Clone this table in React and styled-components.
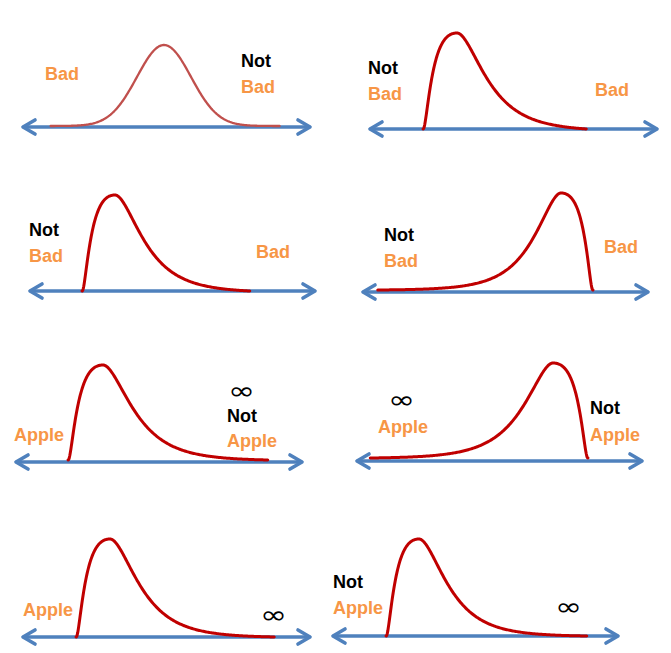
import React from "react";
import styled, { createGlobalStyle } from "styled-components";

const GlobalStyle = createGlobalStyle`
  html, body {
    margin: 0;
    padding: 0;
    background: #ffffff;
  }
`;

const colors = {
  axis: "#4f81bd",
  curve: "#c00000",
  soft: "#c0504d",
  orange: "#f79646",
  black: "#000000",
};

// right / left skewed curve, a gaussian in log space with a different spread on each side
function skewPath({ x0, xm, peak, base, end, dir }) {
  const vm = Math.abs(xm - x0);
  const vEnd = Math.abs(end - x0);
  const h = base - peak;
  const g = (v) => {
    const L = Math.log(v / vm);
    const s = L < 0 ? 1.2 : 0.56;
    return Math.exp((-L * L) / (2 * s * s));
  };
  const pts = [`M${x0} ${base}`];
  for (let v = 0.25; v <= vEnd; v += v < vm * 1.5 ? 0.5 : 1) {
    const t = v / vEnd;
    const y = base - h * g(v) * (1 - t ** 6);
    pts.push(`L${(x0 + dir * v).toFixed(2)} ${y.toFixed(2)}`);
  }
  return pts.join(" ");
}

function bellPath({ c, s, peak, base }) {
  const h = base - peak;
  const pts = [];
  for (let x = c - 4.2 * s; x <= c + 4.3 * s; x += 1) {
    const y = base - h * Math.exp(-((x - c) ** 2) / (2 * s * s));
    pts.push(`${pts.length ? "L" : "M"}${x.toFixed(2)} ${y.toFixed(2)}`);
  }
  return pts.join(" ");
}

const panels = [
  {
    id: "p1",
    axis: { x1: 23, x2: 310, y: 127 },
    soft: true,
    path: bellPath({ c: 164, s: 27, peak: 45, base: 126 }),
    labels: [
      { text: "Bad", x: 45, y: 74, tone: "orange" },
      { text: "Not", x: 241, y: 61, tone: "black" },
      { text: "Bad", x: 241, y: 87, tone: "orange" },
    ],
  },
  {
    id: "p2",
    axis: { x1: 45, x2: 332, y: 129 },
    path: skewPath({ x0: 98, xm: 132, peak: 33, base: 129, end: 262, dir: 1 }),
    labels: [
      { text: "Not", x: 43, y: 68, tone: "black" },
      { text: "Bad", x: 43, y: 94, tone: "orange" },
      { text: "Bad", x: 270, y: 90, tone: "orange" },
    ],
  },
  {
    id: "p3",
    axis: { x1: 30, x2: 315, y: 126 },
    path: skewPath({ x0: 82, xm: 115, peak: 30, base: 126, end: 250, dir: 1 }),
    labels: [
      { text: "Not", x: 29, y: 65, tone: "black" },
      { text: "Bad", x: 29, y: 91, tone: "orange" },
      { text: "Bad", x: 256, y: 87, tone: "orange" },
    ],
  },
  {
    id: "p4",
    axis: { x1: 38, x2: 323, y: 127 },
    path: skewPath({ x0: 268, xm: 236, peak: 28, base: 125, end: 52, dir: -1 }),
    labels: [
      { text: "Not", x: 59, y: 70, tone: "black" },
      { text: "Bad", x: 59, y: 96, tone: "orange" },
      { text: "Bad", x: 279, y: 82, tone: "orange" },
    ],
  },
  {
    id: "p5",
    axis: { x1: 16, x2: 302, y: 132 },
    path: skewPath({ x0: 68, xm: 103, peak: 35, base: 130, end: 268, dir: 1 }),
    labels: [
      { text: "Apple", x: 14, y: 105, tone: "orange" },
      { text: "∞", x: 228, y: 61, tone: "black", sym: true },
      { text: "Not", x: 227, y: 85.5, tone: "black" },
      { text: "Apple", x: 227, y: 111, tone: "orange" },
    ],
  },
  {
    id: "p6",
    axis: { x1: 32, x2: 317, y: 131 },
    path: skewPath({ x0: 263, xm: 228, peak: 33, base: 128, end: 45, dir: -1 }),
    labels: [
      { text: "∞", x: 63, y: 70, tone: "black", sym: true },
      { text: "Apple", x: 53, y: 97, tone: "orange" },
      { text: "Not", x: 265, y: 78, tone: "black" },
      { text: "Apple", x: 265, y: 105, tone: "orange" },
    ],
  },
  {
    id: "p7",
    axis: { x1: 23, x2: 310, y: 142 },
    path: skewPath({ x0: 76, xm: 110, peak: 44, base: 142, end: 275, dir: 1 }),
    labels: [
      { text: "Apple", x: 23, y: 115, tone: "orange" },
      { text: "∞", x: 260, y: 120, tone: "black", sym: true },
    ],
  },
  {
    id: "p8",
    axis: { x1: 8, x2: 293, y: 141 },
    path: skewPath({ x0: 61, xm: 94, peak: 44, base: 141, end: 262, dir: 1 }),
    labels: [
      { text: "Not", x: 8, y: 87, tone: "black" },
      { text: "Apple", x: 8, y: 113, tone: "orange" },
      { text: "∞", x: 230, y: 112, tone: "black", sym: true },
    ],
  },
];

function Axis({ x1, x2, y }) {
  const len = 12;
  const half = 7;
  return (
    <g
      fill="none"
      stroke={colors.axis}
      strokeWidth="3.6"
      strokeLinecap="round"
      strokeLinejoin="round"
    >
      <line x1={x1 + 1} y1={y} x2={x2 - 1} y2={y} />
      <polyline points={`${x1 + len},${y - half} ${x1},${y} ${x1 + len},${y + half}`} />
      <polyline points={`${x2 - len},${y - half} ${x2},${y} ${x2 - len},${y + half}`} />
    </g>
  );
}

export default function App() {
  return (
    <>
      <GlobalStyle />
      <Page>
        {panels.map((p) => (
          <Panel key={p.id}>
            <Chart>
              <Axis {...p.axis} />
              <path
                d={p.path}
                fill="none"
                stroke={p.soft ? colors.soft : colors.curve}
                strokeWidth={p.soft ? 2.3 : 3}
                strokeLinejoin="round"
                strokeLinecap="round"
              />
            </Chart>
            {p.labels.map((l, i) => (
              <Label key={i} $tone={l.tone} $sym={l.sym} $x={l.x} $y={l.y}>
                {l.text}
              </Label>
            ))}
          </Panel>
        ))}
      </Page>
    </>
  );
}

const Page = styled.div`
  display: grid;
  grid-template-columns: 325px 346px;
  grid-template-rows: 165px 165px 165px 158px;
  width: 671px;
  height: 653px;
  background: #ffffff;
  overflow: hidden;
`;

const Panel = styled.div`
  position: relative;
`;

const Chart = styled.svg`
  display: block;
  width: 100%;
  height: 100%;
  overflow: visible;
`;

const Label = styled.span.attrs(({ $x, $y }) => ({
  style: { left: $x, top: $y },
}))`
  position: absolute;
  white-space: nowrap;
  color: ${({ $tone }) => colors[$tone]};
  font-family: ${({ $sym }) =>
    $sym ? '"DejaVu Sans", sans-serif' : '"Liberation Sans", Arial, sans-serif'};
  font-weight: ${({ $sym }) => ($sym ? 400 : 700)};
  font-size: ${({ $sym }) => ($sym ? "24px" : "18px")};
  line-height: ${({ $sym }) => ($sym ? "14px" : "20px")};
  transform-origin: left center;
  transform: ${({ $sym }) =>
    $sym ? "translateY(-50%) scaleX(1.35)" : "translateY(-50%)"};
`;
